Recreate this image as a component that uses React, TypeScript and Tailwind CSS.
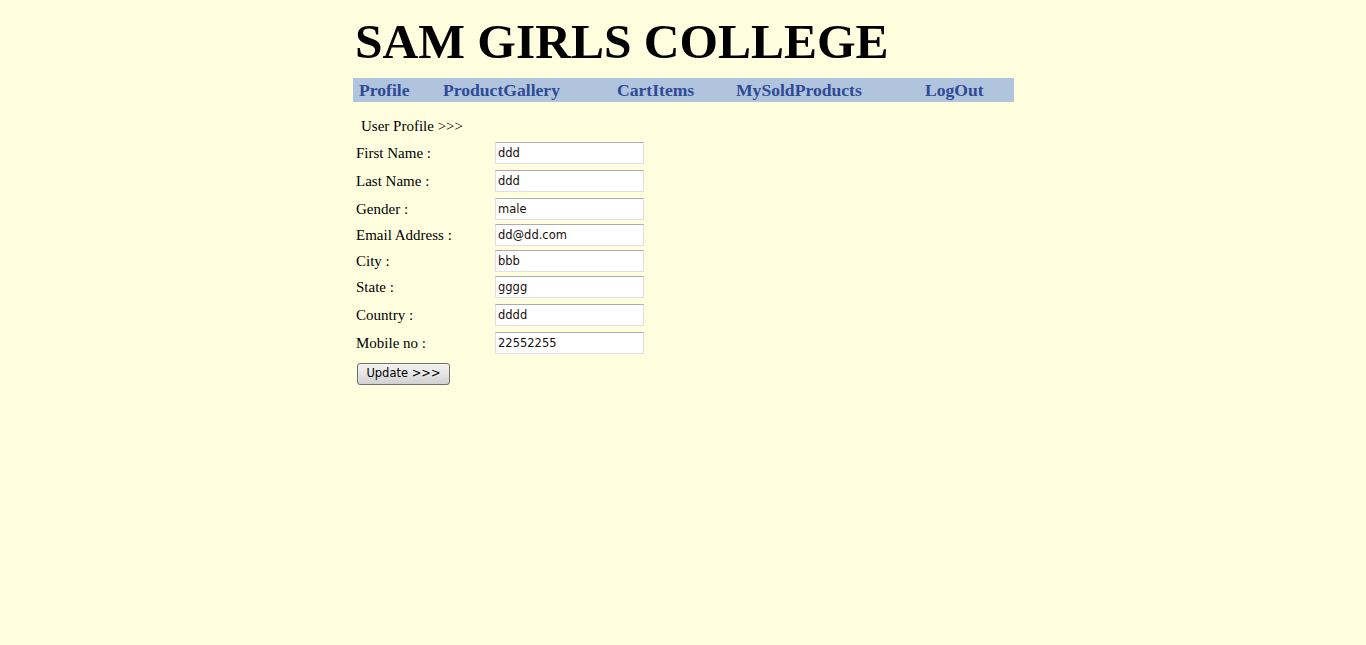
const fields = [
  { label: 'First Name :', value: 'ddd', mt: 'mt-[6px]' },
  { label: 'Last Name :', value: 'ddd', mt: 'mt-[6px]' },
  { label: 'Gender :', value: 'male', mt: 'mt-[6px]' },
  { label: 'Email Address :', value: 'dd@dd.com', mt: 'mt-[4px]' },
  { label: 'City :', value: 'bbb', mt: 'mt-[4px]' },
  { label: 'State :', value: 'gggg', mt: 'mt-[4px]' },
  { label: 'Country :', value: 'dddd', mt: 'mt-[6px]' },
  { label: 'Mobile no :', value: '22552255', mt: 'mt-[6px]' },
];

const navItems = [
  { label: 'Profile', w: 'w-[84px]' },
  { label: 'ProductGallery', w: 'w-[174px]' },
  { label: 'CartItems', w: 'w-[119px]' },
  { label: 'MySoldProducts', w: 'w-[189px]' },
  { label: 'LogOut', w: 'w-[89px]' },
];

export default function App() {
  return (
    <div className="min-h-[645px] bg-[#ffffe0] font-['Liberation_Serif',serif] text-black">
      <div className="ml-[353px] w-[661px] pt-[13px]">
        <h1 className="pl-[2px] text-[49.5px] font-bold leading-[58px]">
          SAM GIRLS COLLEGE
        </h1>

        <nav className="mt-[7px] flex h-[24px] items-center bg-[#b0c4de] pl-[6px]">
          {navItems.map((item) => (
            <a
              key={item.label}
              href="#"
              className={`${item.w} text-[17.6px] font-bold leading-[24px] text-[#2f4a96]`}
            >
              {item.label}
            </a>
          ))}
        </nav>

        <div className="mt-[14px] pl-[8px] text-[15px] leading-[20px]">User Profile &gt;&gt;&gt;</div>

        <form className="mt-[6px] pl-[3px]">
          {fields.map((f, i) => (
            <div key={f.label} className={`flex h-[22px] items-center ${i === 0 ? '' : f.mt}`}>
              <label className="w-[139px] text-[15px] leading-[20px]">{f.label}</label>
              <input
                type="text"
                defaultValue={f.value}
                className="h-[22px] w-[149px] border border-[#dde1e7] border-t-[#abadb3] bg-white px-[2px] font-['DejaVu_Sans',sans-serif] text-[11.5px] text-[#1a0d0d] outline-none"
              />
            </div>
          ))}

          <button
            type="button"
            className="ml-[1px] mt-[9px] h-[22px] w-[93px] rounded-[3px] border border-[#707070] bg-gradient-to-b from-[#f2f2f2] via-[#e6e6e6] to-[#d0d0d0] font-['DejaVu_Sans',sans-serif] text-[11.5px] text-black"
          >
            Update &gt;&gt;&gt;
          </button>
        </form>
      </div>
    </div>
  );
}
